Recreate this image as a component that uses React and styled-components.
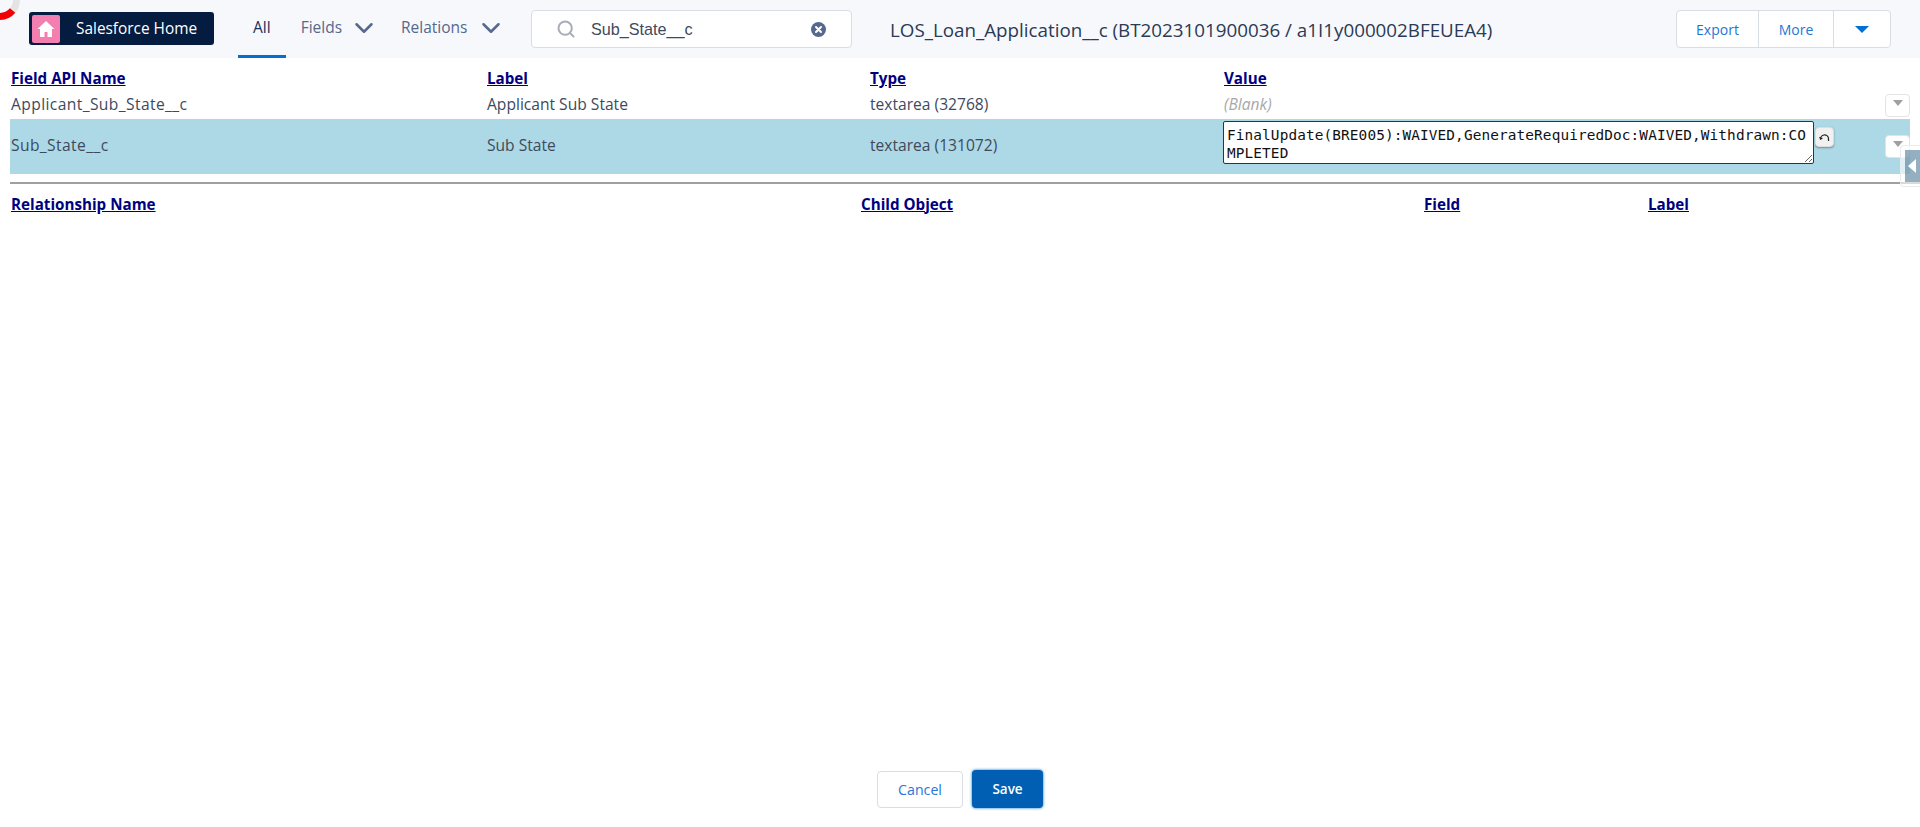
import React from "react";
import styled, { createGlobalStyle } from "styled-components";
import { ChevronDown, Search } from "lucide-react";

const Global = createGlobalStyle`
  html, body { margin: 0; padding: 0; background: #fff; }
  body { font-family: "Open Sans", "Liberation Sans", sans-serif; color: #3e4a5c; overflow: hidden; }
  * { box-sizing: border-box; }
`;

const Page = styled.div`
  position: relative;
  display: flex;
  flex-direction: column;
  height: 827px;
  overflow: hidden;
`;

const Spinner = styled.svg`
  position: absolute;
  left: 0;
  top: 0;
  width: 24px;
  height: 24px;
`;

const Toolbar = styled.header`
  display: flex;
  align-items: stretch;
  height: 58px;
  padding: 0 29px;
  background: #f7f8fb;
`;

const HomeButton = styled.a`
  display: flex;
  flex-shrink: 0;
  align-items: center;
  width: 185px;
  height: 33px;
  margin-top: 12px;
  padding: 3px;
  gap: 16px;
  background: #041c3f;
  border-radius: 3px;
  color: #fff;
  font-size: 15.4px;
`;

const HomeIcon = styled.span`
  display: flex;
  align-items: center;
  justify-content: center;
  width: 28px;
  height: 28px;
  background: #f27fb0;
  border-radius: 2px;
`;

const Tabs = styled.nav`
  display: flex;
  flex-shrink: 0;
  width: 293px;
  margin-left: 24px;
`;

const Tab = styled.a`
  display: flex;
  align-items: center;
  height: 58px;
  padding: 0 ${(p) => p.$pad}px 2px;
  gap: ${(p) => p.$gap || 0}px;
  font-size: 15.5px;
  color: ${(p) => (p.$active ? "#16325c" : "#54698d")};
  border-bottom: 3px solid ${(p) => (p.$active ? "#0070d2" : "transparent")};
`;

const TabChevron = styled(ChevronDown)`
  flex-shrink: 0;
  margin-top: 2px;
`;

const RelationsTab = styled(Tab)`
  margin-left: 7px;
`;

const SearchBox = styled.div`
  display: flex;
  flex-shrink: 0;
  align-items: center;
  width: 321px;
  height: 38px;
  margin-top: 10px;
  margin-right: 38px;
  padding: 0 25px 0 24px;
  background: #fff;
  border: 1px solid #d8dde6;
  border-radius: 4px;
  font-family: "Liberation Sans", Arial, sans-serif;
  font-size: 16.2px;
  color: #3e4a5c;
`;

const SearchText = styled.span`
  flex: 1;
  margin-left: 15px;
`;

const Title = styled.h1`
  flex: 1;
  margin: 0;
  padding-top: 1px;
  align-self: center;
  font-size: 18.8px;
  font-weight: 400;
  color: #2b3a55;
  white-space: nowrap;
`;

const ButtonGroup = styled.div`
  display: flex;
  flex-shrink: 0;
  width: 215px;
  height: 38px;
  margin-top: 10px;
  background: #fff;
  border: 1px solid #d8dde6;
  border-radius: 4px;
`;

const GroupButton = styled.a`
  display: flex;
  align-items: center;
  justify-content: center;
  width: ${(p) => p.$w}px;
  font-size: 14px;
  color: #1f76d4;
  border-right: ${(p) => (p.$last ? "none" : "1px solid #d8dde6")};
`;

const Main = styled.main`
  flex: 1;
  padding: 0 10px;
`;

const Row = styled.div`
  display: grid;
  grid-template-columns: ${(p) => p.$cols};
  align-items: center;
  height: ${(p) => p.$h}px;
  padding-top: ${(p) => p.$top || 0}px;
  background: ${(p) => p.$bg || "transparent"};
  font-size: 15.6px;
`;

const Cell = styled.div`
  margin-top: -3px;
  padding-left: 1px;
  white-space: nowrap;
`;

const ApiCell = styled(Cell)`
  letter-spacing: 0.4px;
`;

const HeadLink = styled.a`
  padding-left: 1px;
  font-size: 15.2px;
  font-weight: 700;
  color: #00007f;
  text-decoration: underline;
`;

const Blank = styled.span`
  color: #a8a8a8;
  font-style: italic;
`;

const ValueCell = styled.div`
  display: flex;
  align-items: flex-start;
  align-self: start;
  margin-top: 2px;
`;

const ValueArea = styled.textarea`
  display: block;
  flex-shrink: 0;
  width: 591px;
  height: 43px;
  padding: 4px 3px 0;
  border: 1px solid #333;
  border-radius: 2px;
  background: #fff;
  color: #111;
  font-family: "DejaVu Sans Mono", "Liberation Mono", monospace;
  font-size: 14.4px;
  letter-spacing: 0.11px;
  line-height: 18px;
  overflow: hidden;
  outline: none;
`;

const UndoButton = styled.button`
  display: flex;
  flex-shrink: 0;
  align-items: center;
  justify-content: center;
  width: 19px;
  height: 20px;
  margin: 6px 0 0 1px;
  padding: 0;
  background: #f1f1f1;
  border: 1px solid #ddd;
  border-radius: 4px;
  box-shadow: 0 1px 2px rgba(0, 0, 0, 0.35);
`;

const RowMenu = styled.button`
  display: flex;
  align-items: center;
  justify-content: center;
  width: 25px;
  height: 23px;
  padding: 0 0 5px;
  background: #fff;
  border: 1px solid #e3e3e3;
  border-radius: 4px;
`;

const Triangle = styled.span`
  width: 0;
  height: 0;
  border-left: ${(p) => p.$w}px solid transparent;
  border-right: ${(p) => p.$w}px solid transparent;
  border-top: ${(p) => p.$h}px solid ${(p) => p.$c};
`;

const Rule = styled.hr`
  height: 2px;
  margin: 8px -10px 7px 0;
  border: none;
  background: #a0a0a0;
`;

const SideHandle = styled.div`
  position: absolute;
  right: 0;
  top: 145px;
  width: 20px;
  height: 42px;
  padding: 4px 0 0 4px;
  background: rgba(255, 255, 255, 0.6);
  border: 1px solid #e9eced;
  border-right: none;
  border-radius: 4px 0 0 4px;
`;

const HandleTab = styled.div`
  display: flex;
  align-items: center;
  justify-content: flex-end;
  height: 32px;
  padding-right: 4px;
  background: rgba(60, 110, 140, 0.55);
`;

const Footer = styled.footer`
  display: flex;
  justify-content: center;
  align-items: center;
  gap: 9px;
  padding-bottom: 19px;
`;

const CancelButton = styled.button`
  width: 86px;
  height: 37px;
  padding: 0;
  background: #fff;
  border: 1px solid #d8dde6;
  border-radius: 4px;
  color: #2b75d6;
  font: 400 14.2px "Open Sans", sans-serif;
`;

const SaveButton = styled.button`
  width: 71px;
  height: 38px;
  padding: 0;
  background: #005fb2;
  border: none;
  border-radius: 4px;
  box-shadow: 0 0 3px #0070d2;
  color: #fff;
  font: 600 13.5px "Open Sans", sans-serif;
`;

const FIELD_COLS = "476px 383px 354px 1fr 25px";
const REL_COLS = "850px 563px 224px 1fr";

const fields = [
  { api: "Applicant_Sub_State__c", label: "Applicant Sub State", type: "textarea (32768)" },
  {
    api: "Sub_State__c",
    label: "Sub State",
    type: "textarea (131072)",
    value: "FinalUpdate(BRE005):WAIVED,GenerateRequiredDoc:WAIVED,Withdrawn:COMPLETED",
  },
];

export default function App() {
  return (
    <Page>
      <Global />
      <Spinner viewBox="0 0 24 24">
        <circle cx="0" cy="0" r="16.5" fill="none" stroke="#e4e4e4" strokeWidth="7" />
        <path d="M12.6 10.6A16.5 16.5 0 0 1 0 16.5" fill="none" stroke="#f00000" strokeWidth="7" />
      </Spinner>
      <Toolbar>
        <HomeButton>
          <HomeIcon>
            <svg width="20" height="20" viewBox="0 0 20 20">
              <path d="M10 2 1.5 10H4v8h4.5v-5h3v5H16v-8h2.5z" fill="#fff" />
            </svg>
          </HomeIcon>
          Salesforce Home
        </HomeButton>
        <Tabs>
          <Tab $active $pad={15}>All</Tab>
          <Tab $pad={15} $gap={7}>
            Fields <TabChevron size={30} color="#54698d" strokeWidth={2} />
          </Tab>
          <RelationsTab $pad={0} $gap={8}>
            Relations <TabChevron size={30} color="#54698d" strokeWidth={2} />
          </RelationsTab>
        </Tabs>
        <SearchBox>
          <Search size={20} color="#a8aeb8" strokeWidth={2.4} />
          <SearchText>Sub_State__c</SearchText>
          <svg width="15" height="15" viewBox="0 0 15 15">
            <circle cx="7.5" cy="7.5" r="7.5" fill="#54698d" />
            <path d="M5 5l5 5M10 5l-5 5" stroke="#fff" strokeWidth="2" strokeLinecap="round" />
          </svg>
        </SearchBox>
        <Title>LOS_Loan_Application__c (BT2023101900036 / a1I1y000002BFEUEA4)</Title>
        <ButtonGroup>
          <GroupButton $w={82}>Export</GroupButton>
          <GroupButton $w={75}>More</GroupButton>
          <GroupButton $w={56} $last>
            <Triangle $w={7} $h={7} $c="#0070d2" />
          </GroupButton>
        </ButtonGroup>
      </Toolbar>
      <Main>
        <Row $cols={FIELD_COLS} $h={34} $top={6}>
          <HeadLink>Field API Name</HeadLink>
          <HeadLink>Label</HeadLink>
          <HeadLink>Type</HeadLink>
          <HeadLink>Value</HeadLink>
        </Row>
        {fields.map((f) => (
          <Row key={f.api} $cols={FIELD_COLS} $h={f.value ? 55 : 27} $bg={f.value ? "#add8e6" : undefined}>
            <ApiCell>{f.api}</ApiCell>
            <Cell>{f.label}</Cell>
            <Cell>{f.type}</Cell>
            {f.value ? (
              <ValueCell>
                <ValueArea readOnly defaultValue={f.value} />
                <UndoButton>
                  <svg width="11" height="11" viewBox="0 0 11 11" fill="none">
                    <path d="M1.5 7.5A4 4 0 0 1 9.5 6.5L9.5 9" stroke="#222" strokeWidth="1.2" />
                    <path d="M0 5l1.5 3L4 6z" fill="#222" />
                  </svg>
                </UndoButton>
              </ValueCell>
            ) : (
              <Cell><Blank>(Blank)</Blank></Cell>
            )}
            <RowMenu>
              <Triangle $w={5} $h={6} $c="#a0a0a0" />
            </RowMenu>
          </Row>
        ))}
        <Rule />
        <Row $cols={REL_COLS} $h={25}>
          <HeadLink>Relationship Name</HeadLink>
          <HeadLink>Child Object</HeadLink>
          <HeadLink>Field</HeadLink>
          <HeadLink>Label</HeadLink>
        </Row>
      </Main>
      <Footer>
        <CancelButton>Cancel</CancelButton>
        <SaveButton>Save</SaveButton>
      </Footer>
      <SideHandle>
        <HandleTab>
          <svg width="8" height="14" viewBox="0 0 8 14">
            <path d="M8 0v14L0 7z" fill="#fff" />
          </svg>
        </HandleTab>
      </SideHandle>
    </Page>
  );
}
